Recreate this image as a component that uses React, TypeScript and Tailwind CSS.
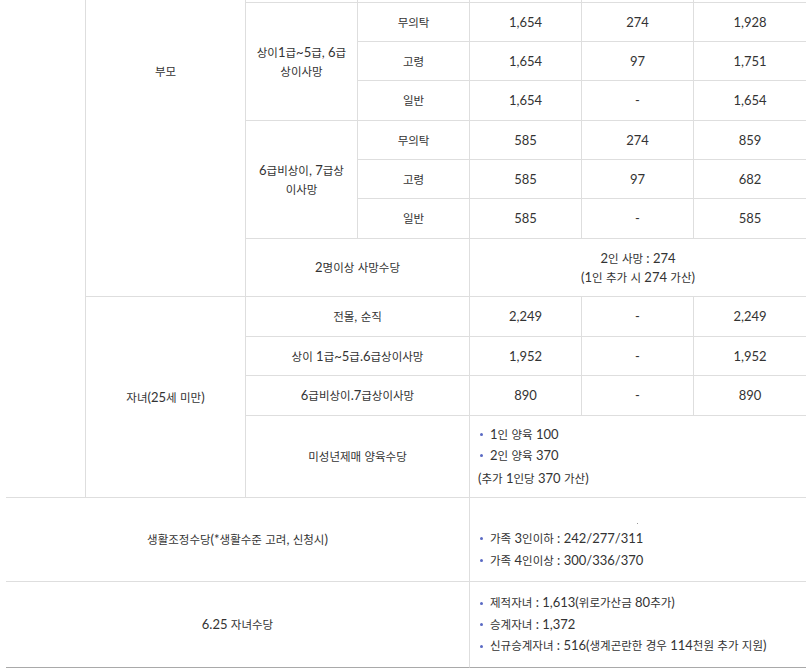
import React from 'react';

const HANGUL = /([\u1100-\u11FF\u3130-\u318F\uAC00-\uD7AF]+)/;

// Hangul runs are set slightly smaller so they sit next to the Lato digits like the original
const T = ({ s }: { s: string }) => (
  <span>
    {s.split(HANGUL).map((part, i) =>
      i % 2 === 1 ? (
        <span key={i} className="text-[11.5px]">
          {part}
        </span>
      ) : (
        <React.Fragment key={i}>{part}</React.Fragment>
      )
    )}
  </span>
);

const cell = 'flex items-center justify-center text-center border-b border-r border-[#dedede]';
const last = 'flex items-center justify-center text-center border-b border-[#dedede]';

const Bullets = ({ items }: { items: string[] }) => (
  <div className="flex flex-col">
    {items.map((it) => (
      <div key={it} className="flex items-center leading-[21.5px]">
        <span className="ml-[2px] mr-[7px] h-[3px] w-[3px] rounded-full bg-[#5a6ac4]" />
        <T s={it} />
      </div>
    ))}
  </div>
);

const ValueRow = ({ label, a, b, c }: { label: string; a: string; b: string; c: string }) => (
  <>
    <div className={cell}>
      <T s={label} />
    </div>
    <div className={cell}>{a}</div>
    <div className={cell}>{b}</div>
    <div className={last}>{c}</div>
  </>
);

const WideRow = ({ label, a, b, c }: { label: string; a: string; b: string; c: string }) => (
  <>
    <div className={`${cell} col-span-2`}>
      <T s={label} />
    </div>
    <div className={cell}>{a}</div>
    <div className={cell}>{b}</div>
    <div className={last}>{c}</div>
  </>
);

export default function App() {
  return (
    <div className="h-[672px] w-[811px] overflow-hidden bg-white font-[Lato,'Noto_Sans_CJK_KR',sans-serif] text-[13px] leading-[19px] text-[#333]">
      <div className="ml-[6px] grid w-[800px] grid-cols-[80px_160px_112px_112px_112px_112px_112px] grid-rows-[3px_39px_39px_40px_39px_39px_40px_58px_40px_39px_40px_82px_84px_86px]">
        {/* group column, label is above the visible area */}
        <div className="row-span-12 border-b border-r border-[#dedede]" />

        <div className="row-span-8 flex items-start justify-center border-b border-r border-[#dedede] pt-[62px]">
          <T s="부모" />
        </div>

        {/* tail of the row above */}
        <div className="border-b border-r border-[#dedede]" />
        <div className="border-b border-r border-[#dedede]" />
        <div className="border-b border-r border-[#dedede]" />
        <div className="border-b border-r border-[#dedede]" />
        <div className="border-b border-[#dedede]" />

        <div className={`${cell} row-span-3`}>
          <div>
            <T s="상이1급~5급, 6급" />
            <br />
            <T s="상이사망" />
          </div>
        </div>
        <ValueRow label="무의탁" a="1,654" b="274" c="1,928" />
        <ValueRow label="고령" a="1,654" b="97" c="1,751" />
        <ValueRow label="일반" a="1,654" b="-" c="1,654" />

        <div className={`${cell} row-span-3`}>
          <div>
            <T s="6급비상이, 7급상" />
            <br />
            <T s="이사망" />
          </div>
        </div>
        <ValueRow label="무의탁" a="585" b="274" c="859" />
        <ValueRow label="고령" a="585" b="97" c="682" />
        <ValueRow label="일반" a="585" b="-" c="585" />

        <div className={`${cell} col-span-2`}>
          <T s="2명이상 사망수당" />
        </div>
        <div className={`${last} col-span-3`}>
          <div>
            <T s="2인 사망 : 274" />
            <br />
            <T s="(1인 추가 시 274 가산)" />
          </div>
        </div>

        <div className={`${cell} row-span-4`}>
          <T s="자녀(25세 미만)" />
        </div>
        <WideRow label="전몰, 순직" a="2,249" b="-" c="2,249" />
        <WideRow label="상이 1급~5급.6급상이사망" a="1,952" b="-" c="1,952" />
        <WideRow label="6급비상이.7급상이사망" a="890" b="-" c="890" />

        <div className={`${cell} col-span-2`}>
          <T s="미성년제매 양육수당" />
        </div>
        <div className="col-span-3 flex items-center border-b border-[#dedede] pl-[8px]">
          <div className="flex flex-col leading-[22px]">
            <Bullets items={['1인 양육 100', '2인 양육 370']} />
            <div className="leading-[22px]">
              <T s="(추가 1인당 370 가산)" />
            </div>
          </div>
        </div>

        <div className={`${cell} col-span-4`}>
          <T s="생활조정수당(*생활수준 고려, 신청시)" />
        </div>
        <div className="col-span-3 flex items-center border-b border-[#dedede] pl-[8px]">
          <div className="flex flex-col">
            <div className="flex h-[20px] items-end pb-[4px] pl-[159px]">
              <span className="h-px w-px bg-[#999]" />
            </div>
            <Bullets items={['가족 3인이하 : 242/277/311', '가족 4인이상 : 300/336/370']} />
          </div>
        </div>

        <div className="col-span-4 flex items-center justify-center border-b border-r border-b-[#a9a9a9] border-r-[#dedede]">
          <T s="6.25 자녀수당" />
        </div>
        <div className="col-span-3 flex items-center border-b border-[#a9a9a9] pl-[8px]">
          <Bullets
            items={[
              '제적자녀 : 1,613(위로가산금 80추가)',
              '승계자녀 : 1,372',
              '신규승계자녀 : 516(생계곤란한 경우 114천원 추가 지원)',
            ]}
          />
        </div>
      </div>
    </div>
  );
}
